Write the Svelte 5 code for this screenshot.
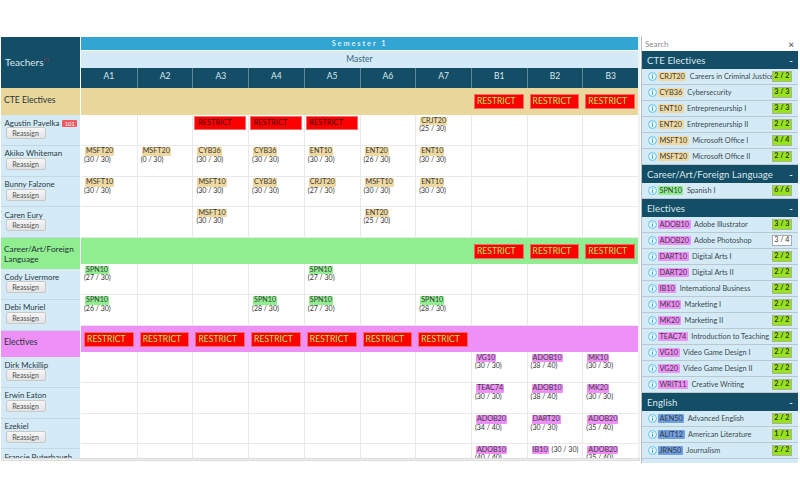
<script>
  const periods = ['A1','A2','A3','A4','A5','A6','A7','B1','B2','B3'];
  const c = (code, count, inline = false) => ({ code, count, inline });
  const R = 'R';
  const _ = null;
  const blocks = [
    { kind:'cte', name:'CTE Electives', restrict:[7,8,9], rows:[
      { name:'Agustin Pavelka', badge:'101', cells:[_,_,R,R,R,_,c('CRJT20','(25 / 30)'),_,_,_] },
      { name:'Akiko Whiteman', cells:[c('MSFT20','(30 / 30)'),c('MSFT20','(0 / 30)'),c('CYB36','(30 / 30)'),c('CYB36','(30 / 30)'),c('ENT10','(30 / 30)'),c('ENT20','(26 / 30)'),c('ENT10','(30 / 30)'),_,_,_] },
      { name:'Bunny Falzone', cells:[c('MSFT10','(30 / 30)'),_,c('MSFT10','(30 / 30)'),c('CYB36','(30 / 30)'),c('CRJT20','(27 / 30)'),c('MSFT10','(30 / 30)'),c('ENT10','(30 / 30)'),_,_,_] },
      { name:'Caren Eury', cells:[_,_,c('MSFT10','(30 / 30)'),_,_,c('ENT20','(25 / 30)'),_,_,_,_] },
    ]},
    { kind:'career', name:'Career/Art/Foreign Language', restrict:[7,8,9], rows:[
      { name:'Cody Livermore', cells:[c('SPN10','(27 / 30)'),_,_,_,c('SPN10','(27 / 30)'),_,_,_,_,_] },
      { name:'Debi Muriel', cells:[c('SPN10','(26 / 30)'),_,_,c('SPN10','(28 / 30)'),c('SPN10','(27 / 30)'),_,c('SPN10','(28 / 30)'),_,_,_] },
    ]},
    { kind:'elect', name:'Electives', restrict:[0,1,2,3,4,5,6], rows:[
      { name:'Dirk Mckillip', cells:[_,_,_,_,_,_,_,c('VG10','(30 / 30)'),c('ADOB10','(38 / 40)'),c('MK10','(30 / 30)')] },
      { name:'Erwin Eaton', cells:[_,_,_,_,_,_,_,c('TEAC74','(30 / 30)'),c('ADOB10','(38 / 40)'),c('MK20','(30 / 30)')] },
      { name:'Ezekiel', cells:[_,_,_,_,_,_,_,c('ADOB20','(34 / 40)'),c('DART20','(30 / 30)'),c('ADOB20','(35 / 40)')] },
      { name:'Francie Buterbaugh', cells:[_,_,_,_,_,_,_,c('ADOB10','(40 / 40)'),c('IB10','(30 / 30)',true),c('ADOB20','(35 / 40)')] },
    ]},
  ];
  const catalog = [
    { kind:'cte', name:'CTE Electives', items:[
      ['CRJT20','Careers in Criminal Justice','2 / 2'],['CYB36','Cybersecurity','3 / 3'],['ENT10','Entrepreneurship I','3 / 3'],
      ['ENT20','Entrepreneurship II','2 / 2'],['MSFT10','Microsoft Office I','4 / 4'],['MSFT20','Microsoft Office II','2 / 2'] ]},
    { kind:'career', name:'Career/Art/Foreign Language', items:[['SPN10','Spanish I','6 / 6']]},
    { kind:'elect', name:'Electives', items:[
      ['ADOB10','Adobe Illustrator','3 / 3'],['ADOB20','Adobe Photoshop','3 / 4',true],['DART10','Digital Arts I','2 / 2'],['DART20','Digital Arts II','2 / 2'],
      ['IB10','International Business','2 / 2'],['MK10','Marketing I','2 / 2'],['MK20','Marketing II','2 / 2'],['TEAC74','Introduction to Teaching','2 / 2'],
      ['VG10','Video Game Design I','2 / 2'],['VG20','Video Game Design II','2 / 2'],['WRIT11','Creative Writing','2 / 2'] ]},
    { kind:'eng', name:'English', items:[['AEN50','Advanced English','2 / 2'],['ALIT12','American Literature','1 / 1'],['JRN50','Journalism','2 / 2'],['','','']]},
  ];
</script>

<div class="page">
  <div class="schedule">
    <div class="panes">
      <div class="teachers">
        <div class="corner">Teachers<sup>(*)</sup></div>
        {#each blocks as b}
          <div class="t-section {b.kind}">{b.name}</div>
          {#each b.rows as r}
            <div class="t-row">
              <div class="t-name">{r.name}{#if r.badge}<span class="room">{r.badge}</span>{/if}</div>
              <button class="reassign">Reassign</button>
            </div>
          {/each}
        {/each}
      </div>
      <div class="grid">
        <div class="semester">Semester 1</div>
        <div class="master">Master</div>
        <div class="cols head">
          {#each periods as p}<div class="period">{p}</div>{/each}
        </div>
        {#each blocks as b}
          <div class="cols band {b.kind}">
            {#each periods as p, i}
              <div class="band-cell">{#if b.restrict.includes(i)}<span class="restrict">RESTRICT</span>{/if}</div>
            {/each}
          </div>
          {#each b.rows as r}
            <div class="cols row">
              {#each r.cells as cell}
                <div class="cell">
                  {#if cell === 'R'}
                    <div class="block">RESTRICT</div>
                  {:else if cell}
                    <span class="chip {b.kind}">{cell.code}</span>{#if cell.inline}<span class="count inline">{cell.count}</span>{:else}<span class="count">{cell.count}</span>{/if}
                  {/if}
                </div>
              {/each}
            </div>
          {/each}
        {/each}
      </div>
    </div>
    <div class="hscroll"></div>
  </div>

  <aside class="side">
    <div class="search"><span>Search</span><b>×</b></div>
    {#each catalog as s}
      <div class="s-head"><span>{s.name}</span><span class="minus">-</span></div>
      {#each s.items as it}
        <div class="s-item">
          {#if it[0]}
            <svg class="info" viewBox="0 0 10 10" width="9" height="9" aria-hidden="true">
              <circle cx="5" cy="5" r="4.4" fill="#eaf6fd" stroke="#5cc3f0" stroke-width="1.1"/>
              <rect x="4.4" y="4.2" width="1.2" height="3.4" fill="#3aa9e0"/>
              <rect x="4.4" y="2.2" width="1.2" height="1.2" fill="#3aa9e0"/>
            </svg>
            <span class="chip big {s.kind}">{it[0]}</span>
            <span class="title">{it[1]}</span>
            <span class="seats" class:open={it[3]}>{it[2]}</span>
          {/if}
        </div>
      {/each}
    {/each}
  </aside>
</div>

<style>
  :global(body) { margin: 0; background: #fff; }
  .page {
    width: 800px; height: 500px; overflow: hidden; display: flex; align-items: flex-start;
    padding-top: 36px; box-sizing: border-box;
    font-family: Lato, "Liberation Sans", sans-serif; color: #2b3a42; background: #fff;
  }
  .schedule { width: 639px; margin-left: 1px; padding-top: 1px; flex: none; }
  .panes { display: flex; height: 421px; overflow: hidden; border-right: 2px solid #eef2f4; }
  .teachers { width: 79px; flex: none; background: #d4eaf6; }
  .corner {
    height: 51px; box-sizing: border-box; background: #134e66; color: #d9e6ec;
    font-size: 10px; display: flex; align-items: center; padding: 0 0 2px 4px;
  }
  .corner sup { color: #b03040; font-size: 5px; align-self: center; margin-bottom: 4px; }
  .t-section {
    box-sizing: border-box; display: flex; align-items: center; padding-left: 3px;
    font-size: 8.6px; line-height: 10px; color: #25333a;
  }
  .t-section.cte { height: 27px; background: #ead79c; padding-bottom: 3px; }
  .t-section.career { height: 31px; background: #90ee90; font-size: 8.3px; }
  .t-section.elect { height: 26.5px; background: #ee90f8; padding-bottom: 3px; }
  .t-row {
    height: 30.75px; box-sizing: border-box; padding: 3.5px 0 0 3.5px;
    border-bottom: 1px solid #c3d8e3; overflow: hidden;
  }
  .t-name { font-size: 7.9px; line-height: 9px; color: #2b3a42; white-space: nowrap; display: flex; align-items: center; }
  .room {
    background: #ee5a5f; color: #fff; font-size: 5.6px; line-height: 7px; padding: 0 2.5px;
    border-radius: 1px; margin-left: 3px;
  }
  .reassign {
    display: block; width: 40px; height: 12px; margin: -0.5px 0 0 1px; padding: 0; box-sizing: border-box;
    font: 7px/10px Lato, "Liberation Sans", sans-serif; color: #555;
    background: linear-gradient(#f6f6f6, #e2e2e2); border: 1px solid #c8c8c8; border-radius: 2px;
  }
  .grid { flex: 1; margin-left: 1px; min-width: 0; }
  .semester {
    height: 13.5px; background: #33a5d3; color: #d8eef8; font-size: 7.4px; font-weight: 700;
    letter-spacing: 1.9px; display: flex; align-items: center; justify-content: center;
    border-bottom: 1px solid #fff; box-sizing: border-box;
  }
  .master {
    height: 17px; background: #d4eaf6; color: #32657c; font-size: 8.5px;
    display: flex; align-items: center; justify-content: center;
  }
  .cols { display: grid; grid-template-columns: repeat(10, 1fr); }
  .head { height: 20.5px; background: #134e66; }
  .period {
    color: #dfe9ee; font-size: 8.5px; display: flex; align-items: center; justify-content: center;
    border-left: 1px solid #5f8798; padding-bottom: 4px; box-sizing: border-box;
  }
  .period:first-child { border-left: 0; }
  .band.cte { height: 27px; background: #ead79c; }
  .band.career { height: 26px; background: #90ee90; }
  .band.elect { height: 26.5px; background: #ee90f8; }
  .band-cell { padding: 6px 3px 0; box-sizing: border-box; }
  .restrict {
    display: block; height: 15px; box-sizing: border-box; background: #ff0000; border: 1px solid #f06a6a;
    color: #a5e86a; font-size: 8.6px; line-height: 13px; padding-left: 2px; white-space: nowrap; overflow: hidden;
  }
  .row { height: 30.75px; box-sizing: border-box; background: #fff; border-bottom: 1px solid #e9e9e9; }
  .cell { border-left: 1px solid #e9e9e9; padding: 1.5px 2px 0 3px; font-size: 7px; line-height: 7.5px; overflow: hidden; box-sizing: border-box; }
  .cell:first-child { border-left: 0; }
  .block {
    height: 14px; margin: -0.5px 0 0 -2px; background: #ff0000; color: #3a0505; font-size: 7.5px; line-height: 12px;
    padding-left: 2.5px; border: 1px solid #f46a6a; box-sizing: border-box; width: 52px;
  }
  .chip {
    display: inline-block; font-size: 7.2px; line-height: 8.5px; padding: 0 1px; margin-left: 1px; color: #3a3a3a;
    border-radius: 1px;
  }
  .chip.cte { background: #f0d9a0; }
  .chip.career { background: #90ee90; }
  .chip.elect { background: #ee90f8; }
  .chip.eng { background: #6f9fe0; }
  .count { display: block; color: #333; font-size: 7px; line-height: 7px; white-space: nowrap; }
  .count.inline { display: inline; margin-left: 3px; }
  .hscroll { height: 3px; background: #efefef; border: 1px solid #dcdcdc; box-sizing: border-box; }

  .side {
    flex: none; width: 157px; margin-left: 1px; height: 427px; overflow: hidden;
    border-left: 1px solid #b4bec4; box-sizing: border-box;
  }
  .search {
    height: 15px; display: flex; justify-content: space-between; align-items: center;
    padding: 0 4px 0 3px; font-size: 8px; color: #8a8a8a; background: #fff;
  }
  .search b { font-size: 10px; color: #666; }
  .s-head {
    height: 18px; background: #134e66; color: #dbe7ec; font-size: 9.6px; display: flex;
    justify-content: space-between; align-items: center; padding: 0 5px; box-sizing: border-box; letter-spacing: 0.1px;
  }
  .minus { font-weight: 700; }
  .s-item {
    height: 16px; background: #d4eaf6; border-bottom: 1px solid #b9c9d1; box-sizing: border-box;
    display: flex; align-items: center; padding: 0 6px 0 6px; white-space: nowrap; overflow: hidden;
  }
  .info { flex: none; }
  .chip.big { font-size: 7.3px; line-height: 9px; margin-left: 1px; padding: 0 1.5px; flex: none; }
  .title { font-size: 7.3px; margin-left: 3.5px; color: #3a4a52; flex: 1; min-width: 0; overflow: visible; }
  .seats {
    flex: none; background: #96e416; border: 1px solid #a8b39a; color: #333; font-size: 7.2px; line-height: 8.5px;
    padding: 0 1.5px; font-weight: 700;
  }
  .seats.open { background: #fff; font-weight: 400; border-color: #aaa; }
</style>
